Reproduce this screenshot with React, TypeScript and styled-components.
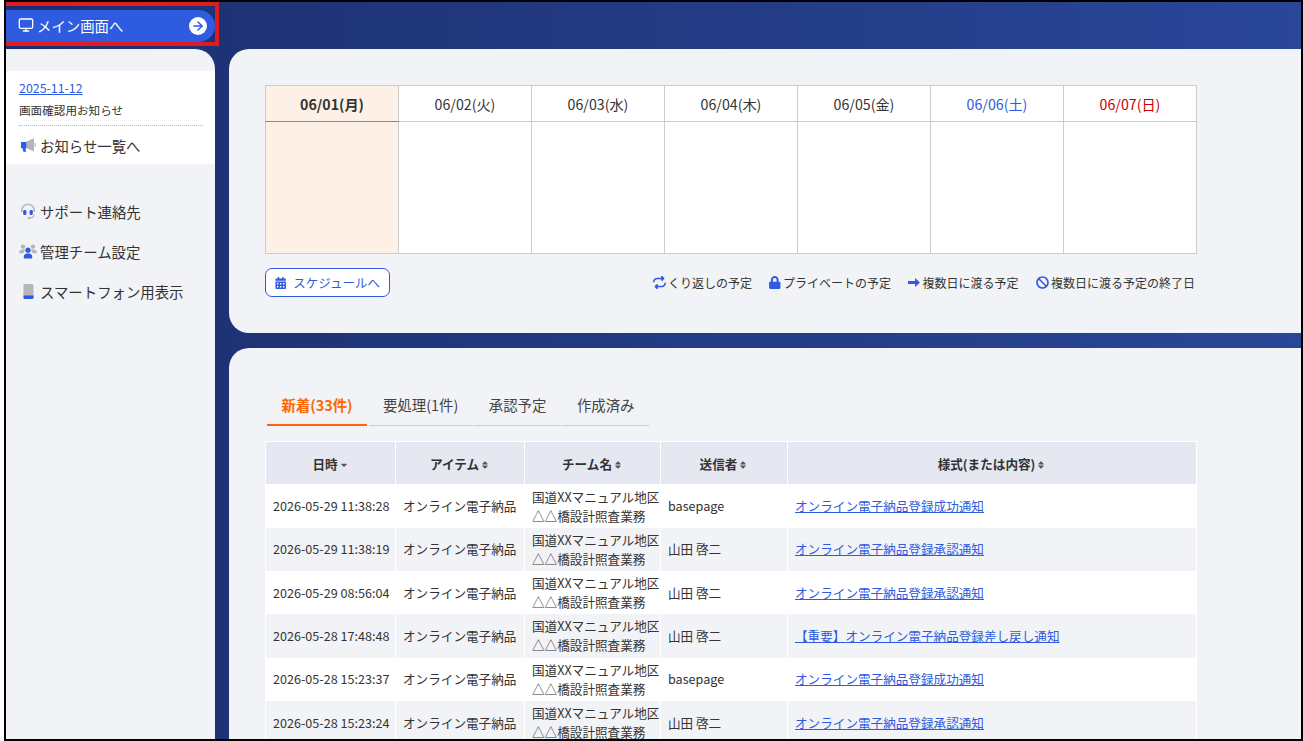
import { createGlobalStyle, styled } from 'styled-components'
import { ArrowRight, Monitor } from 'lucide-react'
import { FaBan, FaCalendarAlt, FaCaretDown, FaLock, FaSort } from 'react-icons/fa'
import { FaRepeat } from 'react-icons/fa6'

const days = [
  { label: '06/01(月)', tone: 'today' },
  { label: '06/02(火)', tone: 'plain' },
  { label: '06/03(水)', tone: 'plain' },
  { label: '06/04(木)', tone: 'plain' },
  { label: '06/05(金)', tone: 'plain' },
  { label: '06/06(土)', tone: 'sat' },
  { label: '06/07(日)', tone: 'sun' },
]

const team = ['国道XXマニュアル地区', '△△橋設計照査業務']

const rows = [
  { at: '2026-05-29 11:38:28', sender: 'basepage', title: 'オンライン電子納品登録成功通知' },
  { at: '2026-05-29 11:38:19', sender: '山田 啓二', title: 'オンライン電子納品登録承認通知' },
  { at: '2026-05-29 08:56:04', sender: '山田 啓二', title: 'オンライン電子納品登録承認通知' },
  { at: '2026-05-28 17:48:48', sender: '山田 啓二', title: '【重要】オンライン電子納品登録差し戻し通知' },
  { at: '2026-05-28 15:23:37', sender: 'basepage', title: 'オンライン電子納品登録成功通知' },
  { at: '2026-05-28 15:23:24', sender: '山田 啓二', title: 'オンライン電子納品登録承認通知' },
]

const columns = [
  { label: '日時', width: 130, sorted: true },
  { label: 'アイテム', width: 129, sorted: false },
  { label: 'チーム名', width: 136, sorted: false },
  { label: '送信者', width: 127, sorted: false },
  { label: '様式(または内容)', width: 409, sorted: false },
]

const tabs = [
  { label: '新着(33件)', active: true },
  { label: '要処理(1件)', active: false },
  { label: '承認予定', active: false },
  { label: '作成済み', active: false },
]

const MegaphoneIcon = () => (
  <svg width="16" height="16" viewBox="0 0 16 16">
    <path d="M6.5 4.6 14 1.2v13.4L6.5 11.2z" fill="#b4b6ba" />
    <path d="M1 5h5.5v6.2H5.4l.8 3.6H3.4l-.8-3.6H1z" fill="#2e5be0" />
    <rect x="14.6" y="6" width="1.2" height="3.6" fill="#b4b6ba" />
  </svg>
)

const HeadsetIcon = () => (
  <svg width="16" height="17" viewBox="0 0 16 17">
    <path d="M1.8 9V7.4a6.2 6.2 0 0 1 12.4 0V9" fill="none" stroke="#b4b6ba" strokeWidth="1.6" />
    <path d="M14 11.5c0 2.2-1.6 3.4-4 3.4" fill="none" stroke="#b4b6ba" strokeWidth="1.2" />
    <circle cx="9" cy="15" r="1.3" fill="#b4b6ba" />
    <rect x="3.2" y="7" width="3.2" height="5" rx="1.3" fill="#2e5be0" />
    <rect x="9.6" y="7" width="3.2" height="5" rx="1.3" fill="#2e5be0" />
  </svg>
)

const TeamIcon = () => (
  <svg width="18" height="15" viewBox="0 0 18 15">
    <circle cx="4" cy="2.6" r="2.2" fill="#b4b6ba" />
    <circle cx="14" cy="2.6" r="2.2" fill="#b4b6ba" />
    <path d="M0 9c0-2.2 1.4-3.4 3.4-3.4h1.8c.6 0 1.1.2 1.5.4C5.3 7 4.7 8 4.5 9.2H0zM18 9c0-2.2-1.4-3.4-3.4-3.4h-1.8c-.6 0-1.1.2-1.5.4 1.4 1 2 2 2.2 3.2H18z" fill="#b4b6ba" />
    <circle cx="9" cy="6.2" r="2.6" fill="#2e5be0" />
    <path d="M4.8 14.6v-1.8c0-2 1.5-3.2 3-3.2h2.4c1.5 0 3 1.2 3 3.2v1.8z" fill="#2e5be0" />
  </svg>
)

const PhoneIcon = () => (
  <svg width="11" height="15" viewBox="0 0 11 15">
    <rect x="0.5" y="0" width="10" height="15" rx="1.6" fill="#b4b6ba" />
    <path d="M.5 11.5h10v1.9a1.6 1.6 0 0 1-1.6 1.6H2.1A1.6 1.6 0 0 1 .5 13.4z" fill="#2e5be0" />
  </svg>
)

const BlockArrowIcon = () => (
  <svg width="12" height="9" viewBox="0 0 12 9">
    <path d="M0 3h7V0l5 4.5-5 4.5V6H0z" fill="#2e5be0" />
  </svg>
)

const App = () => (
  <>
    <GlobalStyle />
    <Frame>
      <Highlight />
      <Side>
        <MainButton>
          <MainLabel>
            <Monitor size={16} strokeWidth={2} />
            メイン画面へ
          </MainLabel>
          <ArrowDisc>
            <ArrowRight size={14} strokeWidth={2.5} />
          </ArrowDisc>
        </MainButton>
        <SidePanel>
          <Notice>
            <NoticeBody>
              <DateLink href="#">2025-11-12</DateLink>
              <NoticeText>画面確認用お知らせ</NoticeText>
            </NoticeBody>
            <NavItem>
              <NavIcon>
                <MegaphoneIcon />
              </NavIcon>
              お知らせ一覧へ
            </NavItem>
          </Notice>
          <Nav>
            <NavItem>
              <NavIcon>
                <HeadsetIcon />
              </NavIcon>
              サポート連絡先
            </NavItem>
            <NavItem>
              <NavIcon>
                <TeamIcon />
              </NavIcon>
              管理チーム設定
            </NavItem>
            <NavItem>
              <NavIcon>
                <PhoneIcon />
              </NavIcon>
              スマートフォン用表示
            </NavItem>
          </Nav>
        </SidePanel>
      </Side>
      <Main>
        <ScheduleCard>
          <Calendar>
            <thead>
              <tr>
                {days.map((day) => (
                  <DayHead key={day.label} $tone={day.tone}>
                    {day.label}
                  </DayHead>
                ))}
              </tr>
            </thead>
            <tbody>
              <tr>
                {days.map((day) => (
                  <DayCell key={day.label} $today={day.tone === 'today'} />
                ))}
              </tr>
            </tbody>
          </Calendar>
          <ScheduleFooter>
            <ScheduleButton>
              <FaCalendarAlt size={12} />
              スケジュールへ
            </ScheduleButton>
            <Legend>
              <LegendItem>
                <FaRepeat size={13} />
                <span>くり返しの予定</span>
              </LegendItem>
              <LegendItem>
                <LockMark>
                  <FaLock size={13} />
                </LockMark>
                <span>プライベートの予定</span>
              </LegendItem>
              <LegendItem>
                <BlockArrowIcon />
                <span>複数日に渡る予定</span>
              </LegendItem>
              <LegendItem>
                <FaBan size={13} />
                <span>複数日に渡る予定の終了日</span>
              </LegendItem>
            </Legend>
          </ScheduleFooter>
        </ScheduleCard>
        <MessageCard>
          <Tabs>
            {tabs.map((tab) => (
              <Tab key={tab.label} $active={tab.active}>
                {tab.label}
              </Tab>
            ))}
          </Tabs>
          <MessageTable>
            <colgroup>
              {columns.map((column) => (
                <col key={column.label} width={column.width} />
              ))}
            </colgroup>
            <thead>
              <tr>
                {columns.map((column) => (
                  <HeadCell key={column.label}>
                    {column.label}
                    <SortMark>{column.sorted ? <FaCaretDown /> : <FaSort />}</SortMark>
                  </HeadCell>
                ))}
              </tr>
            </thead>
            <tbody>
              {rows.map((row) => (
                <Row key={row.at}>
                  <Cell>{row.at}</Cell>
                  <Cell>オンライン電子納品</Cell>
                  <Cell>
                    {team[0]}
                    <br />
                    {team[1]}
                  </Cell>
                  <Cell>{row.sender}</Cell>
                  <Cell>
                    <TitleLink href="#">{row.title}</TitleLink>
                  </Cell>
                </Row>
              ))}
            </tbody>
          </MessageTable>
        </MessageCard>
      </Main>
    </Frame>
  </>
)

export default App

const GlobalStyle = createGlobalStyle`
  html, body {
    margin: 0;
    height: 100%;
    overflow: hidden;
    background: #fff;
  }

  body {
    font-family: 'Noto Sans CJK JP', 'Noto Sans', sans-serif;
    color: #333;
  }

  * {
    box-sizing: border-box;
  }
`

const Frame = styled.div`
  position: relative;
  display: flex;
  gap: 14px;
  width: 1299px;
  height: 741px;
  margin-left: 4px;
  border: 2px solid #000;
  overflow: hidden;
  background: linear-gradient(90deg, #1b2f6e 0%, #2a4698 100%);
`

const Highlight = styled.div`
  position: absolute;
  top: 0;
  left: -4px;
  width: 217px;
  height: 44px;
  border: 4px solid #e01b22;
  z-index: 2;
`

const Side = styled.aside`
  display: flex;
  flex-direction: column;
  flex: 0 0 209px;
  padding-top: 8px;
  gap: 7px;
`

const MainButton = styled.div`
  display: flex;
  align-items: center;
  justify-content: space-between;
  height: 32px;
  padding: 0 8px 0 12px;
  border-radius: 0 16px 16px 0;
  background: #2e5be0;
  color: #fff;
  font-size: 14.4px;
`

const MainLabel = styled.span`
  display: flex;
  align-items: center;
  gap: 3px;
  padding-bottom: 2px;
`

const ArrowDisc = styled.span`
  display: flex;
  align-items: center;
  justify-content: center;
  width: 18px;
  height: 18px;
  border-radius: 50%;
  background: #fff;
  color: #2e5be0;
`

const SidePanel = styled.div`
  flex: 1;
  padding-top: 22px;
  border-radius: 0 20px 0 0;
  background: #f2f3f7;
`

const Notice = styled.section`
  height: 93px;
  padding-top: 8px;
  background: #fff;
`

const NoticeBody = styled.div`
  display: flex;
  flex-direction: column;
  gap: 4px;
  height: 47px;
  margin: 0 12px 0 13px;
  border-bottom: 1px dotted #bbb;
`

const DateLink = styled.a`
  color: #2e5be0;
  font-size: 12.4px;
  line-height: 18px;
`

const NoticeText = styled.span`
  font-size: 11.6px;
  line-height: 18px;
`

const Nav = styled.nav`
  display: flex;
  flex-direction: column;
  margin-top: 28px;
`

const NavItem = styled.div`
  display: flex;
  align-items: center;
  gap: 3px;
  height: 40px;
  padding: 0 0 2px 13px;
  font-size: 14.4px;
`

const NavIcon = styled.span`
  display: flex;
  align-items: center;
  justify-content: center;
  flex: 0 0 18px;
`

const Main = styled.main`
  display: flex;
  flex-direction: column;
  flex: 1;
  gap: 15px;
  padding-top: 47px;
  min-width: 0;
`

const ScheduleCard = styled.section`
  flex: 0 0 284px;
  padding: 36px 36px 0;
  border-radius: 20px 0 0 20px;
  background: #f2f3f7;
`

const Calendar = styled.table`
  width: 932px;
  table-layout: fixed;
  border-collapse: collapse;
  background: #fff;
`

const toneColors: Record<string, string> = {
  today: '#333',
  plain: '#333',
  sat: '#2e5be0',
  sun: '#c00',
}

const DayHead = styled.th<{ $tone: string }>`
  height: 36px;
  padding: 0;
  border: 1px solid #ccc;
  border-bottom-color: ${({ $tone }) => ($tone === 'today' ? '#f60' : '#ccc')};
  background: ${({ $tone }) => ($tone === 'today' ? '#fdf0e6' : '#fff')};
  color: ${({ $tone }) => toneColors[$tone]};
  font-size: 14.2px;
  font-weight: ${({ $tone }) => ($tone === 'today' ? 700 : 400)};
`

const DayCell = styled.td<{ $today: boolean }>`
  height: 132px;
  padding: 0;
  border: 1px solid #ccc;
  border-top-color: ${({ $today }) => ($today ? '#f60' : '#ccc')};
  background: ${({ $today }) => ($today ? '#fdf0e6' : '#fff')};
`

const ScheduleFooter = styled.div`
  display: flex;
  align-items: center;
  justify-content: space-between;
  width: 930px;
  margin-top: 14px;
`

const ScheduleButton = styled.button`
  display: flex;
  align-items: center;
  gap: 7px;
  width: 125px;
  height: 29px;
  padding: 0 9px;
  border: 1px solid #2e5be0;
  border-radius: 7px;
  background: #fff;
  color: #2e5be0;
  font-family: inherit;
  font-size: 12.5px;
  white-space: nowrap;
`

const Legend = styled.div`
  display: flex;
  align-items: center;
  gap: 17.5px;
`

const LegendItem = styled.div`
  display: flex;
  align-items: center;
  gap: 2px;
  font-size: 12px;

  svg {
    color: #2e5be0;
  }
`

const LockMark = styled.span`
  display: flex;

  svg {
    width: 11.5px;
    height: 13px;
  }
`

const MessageCard = styled.section`
  flex: 1;
  padding: 37px 36px 0;
  overflow: hidden;
  border-radius: 20px 0 0 0;
  background: #f2f3f7;
`

const Tabs = styled.div`
  display: flex;
  gap: 1.5px;
  margin-left: 2px;
`

const Tab = styled.div<{ $active: boolean }>`
  padding: 10px 14.5px 9px;
  border-bottom: ${({ $active }) => ($active ? '2px solid #f60' : '1px solid #ccc')};
  color: ${({ $active }) => ($active ? '#f60' : '#444')};
  font-size: 14.4px;
  font-weight: ${({ $active }) => ($active ? 700 : 400)};
  line-height: 20px;
`

const MessageTable = styled.table`
  width: 932px;
  margin-top: 15px;
  table-layout: fixed;
  border-collapse: collapse;
  font-size: 12.6px;
`

const HeadCell = styled.th`
  height: 43px;
  padding: 0;
  border: 1px solid #fff;
  background: #e6e8f1;
  font-size: 12.6px;
  font-weight: 700;
`

const SortMark = styled.span`
  display: inline-block;
  margin: 0 2px 0 3px;
  color: #555;
  vertical-align: -1px;

  svg {
    display: block;
    width: 6px;
    height: 10px;
  }
`

const Row = styled.tr`
  background: #fff;

  &:nth-child(even) {
    background: #f2f3f7;
  }
`

const Cell = styled.td`
  height: 43.33px;
  padding: 0 7px 1.5px;
  border: 1px solid #fff;
  border-width: 0 1px;
  line-height: 19px;
  white-space: nowrap;
`

const TitleLink = styled.a`
  color: #2e5be0;
`
